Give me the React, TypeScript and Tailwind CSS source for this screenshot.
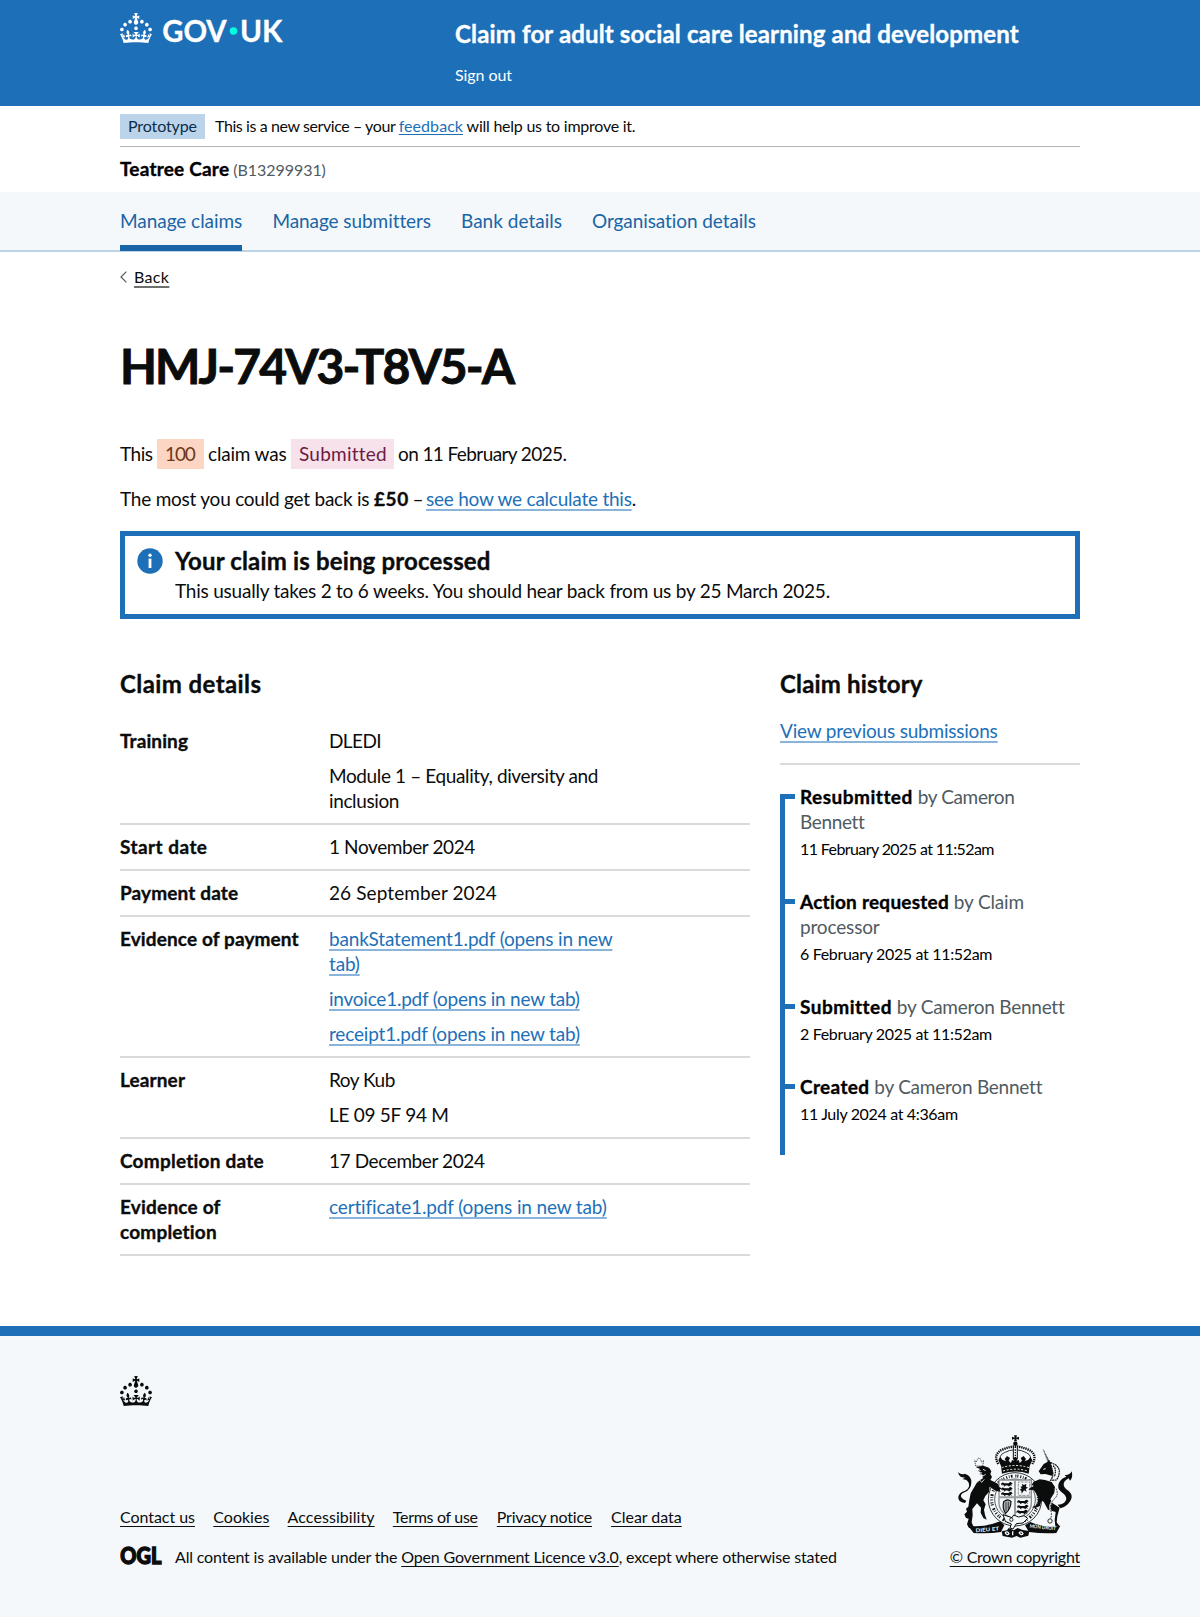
import React from 'react';

const LINK =
  'text-[#1d70b8] underline decoration-2 decoration-[#8ab4da] underline-offset-[3px]';
const FOOT_LINK = 'underline decoration-1 underline-offset-[3px]';
const BOLD = 'font-bold [-webkit-text-stroke:0.35px_currentColor]';

function CrownIcon({ className }: { className: string }) {
  return (
    <svg viewBox="0 0 32 30" className={className} fill="currentColor" aria-hidden="true">
      <path
        fillRule="evenodd"
        d="M22.6 10.4c-1 .4-2-.1-2.4-1-.4-.9.1-2 1-2.4.9-.4 2 .1 2.4 1s-.1 2-1 2.4m-5.9 6.7c-.9.4-2-.1-2.4-1-.4-.9.1-2 1-2.4.9-.4 2 .1 2.4 1s-.1 2-1 2.4m10.8-3.7c-1 .4-2-.1-2.4-1-.4-.9.1-2 1-2.4.9-.4 2 .1 2.4 1s0 2-1 2.4m3.3 4.8c-1 .4-2-.1-2.4-1-.4-.9.1-2 1-2.4.9-.4 2 .1 2.4 1s-.1 2-1 2.4M17 4.7l2.3 1.2V2.5l-2.3.7-.2-.2.9-3h-3.4l.9 3-.2.2c-.1.1-2.3-.7-2.3-.7v3.4L15 4.7c.1.1.1.2.2.2l-1.3 4c-.1.2-.1.4-.1.6 0 1.1.8 2 1.9 2.2h.7c1-.2 1.9-1.1 1.9-2.1 0-.2 0-.4-.1-.6l-1.3-4c-.1-.2 0-.2.1-.3m-7.6 5.7c.9.4 2-.1 2.4-1 .4-.9-.1-2-1-2.4-.9-.4-2 .1-2.4 1s0 2 1 2.4m-5 3c.9.4 2-.1 2.4-1 .4-.9-.1-2-1-2.4-.9-.4-2 .1-2.4 1s.1 2 1 2.4m-3.2 4.8c.9.4 2-.1 2.4-1 .4-.9-.1-2-1-2.4-.9-.4-2 .1-2.4 1s0 2 1 2.4m14.8 11c4.4 0 8.6.3 12.3.8 1.1-4.5 2.4-7 3.7-8.8l-2.5-.9c.2 1.3.3 1.9 0 2.7-.4-.4-.8-1.1-1.1-2.3l-1.2 4c.7-.5 1.3-.8 2-.9-1.1 2.5-2.6 3.1-3.5 3-1.1-.2-1.7-1.2-1.5-2.1.3-1.2 1.5-1.5 2.1-.1 1.1-2.3-.8-3-2-2.3 1.9-1.9 2.1-3.5.6-5.6-2.1 1.6-2.1 3.2-1.2 5.5-1.2-1.4-3.2-.6-2.5 1.6.9-1.4 2.1-.5 1.9.8-.2 1.1-1.7 2.1-3.5 1.9-2.7-.2-2.9-2.1-2.9-3.6.7-.1 1.9.5 2.9 1.9l.4-4.3c-1.1 1.1-2.1 1.4-3.2 1.4.4-1.2 2.1-3 2.1-3h-5.4s1.7 1.9 2.1 3c-1.1 0-2.1-.2-3.2-1.4l.4 4.3c1-1.4 2.2-2 2.9-1.9-.1 1.5-.2 3.4-2.9 3.6-1.9.2-3.4-.8-3.5-1.9-.2-1.3 1-2.2 1.9-.8.7-2.3-1.2-3-2.5-1.6.9-2.2.9-3.9-1.2-5.5-1.5 2-1.3 3.7.6 5.6-1.2-.7-3.1 0-2 2.3.6-1.4 1.8-1.1 2.1.1.2.9-.3 1.9-1.5 2.1-.9.2-2.4-.5-3.5-3 .6 0 1.2.3 2 .9l-1.2-4c-.3 1.1-.7 1.9-1.1 2.3-.3-.8-.2-1.4 0-2.7l-2.9.9C1.3 23 2.6 25.5 3.7 30c3.7-.5 7.9-.8 12.3-.8"
      />
    </svg>
  );
}

function GovUkWordmark() {
  return (
    <svg
      width="128"
      height="44"
      viewBox="0 0 128 44"
      className="ml-[9px] font-['Lato',sans-serif] text-[31px] font-bold"
      fill="#fff"
    >
      <text x="1.2" y="29" textLength="64.500" lengthAdjust="spacingAndGlyphs" stroke="#fff" strokeWidth="0.3">
        GOV
      </text>
      <circle cx="72.5" cy="18" r="3.8" fill="#00ffe0" />
      <text x="79" y="29" textLength="42.500" lengthAdjust="spacingAndGlyphs" stroke="#fff" strokeWidth="0.3">
        UK
      </text>
    </svg>
  );
}

/** Walking lion used in the shield quarters. */
function Passant({ x, y }: { x: number; y: number }) {
  return (
    <path
      transform={`translate(${x} ${y})`}
      d="M0 2q5-5 9 0l13 0q5-7 9-2l3 3-5 3 3 5-5-3-4 4-2-3-7-1-5 4-1-5-4 2-1-4-4 3z"
    />
  );
}

function RoyalArms() {
  return (
    <svg width="118" height="105" viewBox="79 40 354 315" className="mr-[6px]" fill="#0b0c0c" stroke="none" aria-hidden="true">
      {/* cross and orb */}
      <path d="M253 44h9l-2 7 8-3v9l-8-3 2 8h-9l2-8-8 3v-9l8 3z" />
      <circle cx="257" cy="69" r="6.5" />
      {/* crown arches with pearls */}
      <g fill="none" stroke="#0b0c0c">
        <path d="M206 130Q188 100 220 86Q240 78 257 77Q275 78 294 86Q326 100 308 130" strokeWidth="7" strokeDasharray="4 2.5" />
        <path d="M215 128Q204 104 224 96Q240 88 250 88M299 128Q310 104 290 96Q274 88 264 88" strokeWidth="2.5" />
        <path d="M251 76v38M263 76v38" strokeWidth="3" />
        <path d="M257 78v34" strokeWidth="4" strokeDasharray="4 4" />
      </g>
      <path d="M257 108l8 6-5 6 7-2 3 9 7-7-4-8 9-6 7 9-4 7 11-5 6-8 6 9-8 18-3 23q-40-13-80 0l-3-23-8-18 6-9 6 8 11 5-4-7 7-9 9 6-4 8 7 7 3-9 7 2-5-6z" />
      <path d="M216 141q41-13 82 0M220 151q37-11 74 0" fill="none" stroke="#f4f8fb" strokeWidth="3" strokeDasharray="6 5" />
      {/* garter */}
      <circle cx="256" cy="236" r="80" fill="#f4f8fb" stroke="#0b0c0c" strokeWidth="2.5" />
      <circle cx="256" cy="236" r="70" fill="none" stroke="#0b0c0c" strokeWidth="9" strokeDasharray="3 5 2 4 5 9 3 3 3 6" />
      <circle cx="256" cy="236" r="61" fill="none" stroke="#0b0c0c" strokeWidth="2" />
      {/* shield */}
      <path d="M208 178h97v72q-2 30-48 47q-46-17-49-47z" fill="#f4f8fb" stroke="#8b8f92" strokeWidth="4" />
      <Passant x={215} y={186} />
      <Passant x={215} y={201} />
      <Passant x={215} y={215} />
      <rect x="266" y="184" width="34" height="40" fill="none" stroke="#0b0c0c" strokeWidth="2" strokeDasharray="2 2" />
      <path d="M277 189l6 4 7-4-1 9 6 3-7 4 3 8-8-4-7 10-1-9-5-2 6-5-4-5 6-1z" />
      <path d="M222 243q12-10 22-1q0 23-16 36q-11-14-6-35z" fill="#a9acaf" stroke="#0b0c0c" strokeWidth="3.5" />
      <path d="M229 245v27M236 244v22" stroke="#0b0c0c" strokeWidth="2" />
      <Passant x={263} y={239} />
      <Passant x={263} y={254} />
      <Passant x={261} y={269} />
      <path d="M256 179v117M208 230h97" stroke="#9a9da0" strokeWidth="6" />
      {/* garter buckle and strap */}
      <path d="M220 282l27 9 5-8 15 6 16-4 11 8-14 14-20 2-10 16-9-3 4-12-18-8z" fill="#f4f8fb" stroke="#0b0c0c" strokeWidth="3" />
      <circle cx="245" cy="297" r="5" fill="none" stroke="#0b0c0c" strokeWidth="2.5" />
      {/* lion supporter */}
      <path d="M135 119l5 5 4-9 4-4 4 4 4 9 6-5-3 17h-21z" fill="none" stroke="#0b0c0c" strokeWidth="2" strokeDasharray="4 2" />
      <path d="M138 139l23-4 17 6 7 11-3 8 5 9-5 9 14 7 10 6 2 8 8 4-6 4 3 6-14-2-19-13-2 16-11 12-6 13 7 12-5 16 3 16 5 14-10-5-8-16 1-15-12-13-14 17 1 19-3 21 7 17h-15l-6-11 5-17-8-2-5-11 8-8-3-9 7-6 3-20 4-20 11-19 9-16 17-10-2-9-9-3 4-6-8-5 6-5z" />
      <path d="M144 147l9 3M160 146l8 4M146 161l9-1 5 6 8-5M155 154l-2 6M141 186l9-8 6 7 8-9" fill="none" stroke="#f4f8fb" strokeWidth="2.5" />
      <path d="M106 247q-22-3-20-19q3-14 20-18q17-8 11-24q-6-11-19-10l8-5l-12-2q-7-4-9-14q11 9 20 4q21 6 20 27q-1 20-19 28q-18 8-10 17q5 6 14 9z" />
      {/* unicorn supporter */}
      <path d="M341 87l20 38-5 3z" fill="#777b7e" stroke="#0b0c0c" strokeWidth="1.5" strokeDasharray="3 2" />
      <path d="M327 152l15-22 11-6 5-7 4 8 10 10 7 16-13 14-19-5-14 1z" />
      <path d="M362 126q26 7 27 26q0 14-9 26l-17 1q9-13 6-27z" fill="#f4f8fb" stroke="#0b0c0c" strokeWidth="3.5" strokeDasharray="6 1.5" />
      <path d="M370 135q12 9 4 34" fill="none" stroke="#0b0c0c" strokeWidth="3.500" strokeDasharray="5 2" />
      <path d="M341 146l7-2" stroke="#f4f8fb" strokeWidth="3" />
      <path d="M312 183l18-7 16 2 20 6 10 15-2 17-12 20 7 12 21 13-7 26-2 18 9 12-13-1-2-18 3-24-23-7-13-24-7-3-4 16-14 6-10-2 15-8 4-17-5-14-9-13-16-1 6-6 10-4-4-8z" />
      <path d="M377 202q10 19-5 33t-9 40" fill="none" stroke="#f4f8fb" strokeWidth="5" />
      <path d="M379 204q10 18-6 32t-8 39q1 14-3 20" fill="none" stroke="#0b0c0c" strokeWidth="2.5" strokeDasharray="5 3" />
      <circle cx="361" cy="301" r="6.5" fill="none" stroke="#0b0c0c" strokeWidth="2.5" />
      <path d="M384 252q24-1 26-18q-1-10-14-19q-16-12-8-29q7-13 22-18l-5-5q14 2 21-11q5 18-5 28l-4-7q-16 8-15 20q2 10 16 19q14 14 4 29q-11 17-30 22z" />
      {/* compartment and motto ribbon */}
      <path d="M114 314l20 3q39 1 78-15l12 12-10 20q-34 5-82 3z" />
      <path d="M392 315l-19 3q-39 1-71-14l-16 10 12 20q40 5 82 3z" />
      <path d="M216 332l16-3 5-7 15 7 12-7 15 6 20 3-3 14-24 6-11-5-14 5-28-5z" />
      <path d="M226 336q8-6 12 3-5 7-12-3M268 336q8-6 12 3-5 7-12-3M249 332v12" fill="none" stroke="#f4f8fb" strokeWidth="4" />
      <g fill="#f4f8fb" className="font-['Lato',sans-serif] text-[15px] font-bold">
        <text x="138" y="332" textLength="70" lengthAdjust="spacingAndGlyphs" transform="rotate(-5 173 327)">
          DIEU ET
        </text>
        <text x="299" y="325" textLength="79" lengthAdjust="spacingAndGlyphs" transform="rotate(6 338 325)">
          MON DROIT
        </text>
      </g>
    </svg>
  );
}

function Header() {
  return (
    <header className="h-[106px] bg-[#1d70b8] text-white">
      <div className="mx-auto flex w-[960px]">
        <div className="flex w-[335px] pt-[13px]">
          <CrownIcon className="h-[30px] w-8" />
          <GovUkWordmark />
        </div>
        <div className="pt-[19px]">
          <div className={`text-2xl leading-[30px] tracking-[0.15px] ${BOLD}`}>
            Claim for adult social care learning and development
          </div>
          <div className="mt-[16px] text-base leading-5 tracking-[-0.07px]">Sign out</div>
        </div>
      </div>
    </header>
  );
}

function PhaseBanner() {
  return (
    <div className="mx-auto w-[960px]">
      <div className="flex h-[41px] items-start border-b border-[#b1b4b6] pt-2 text-base leading-5">
        <span className="mr-2.5 h-[25px] w-[85px] bg-[#bbd4ea] px-2 pt-0.5 tracking-[-0.11px] text-[#0c2d4a]">
          Prototype
        </span>
        <span className="pt-0.5 tracking-[-0.41px]">
          This is a new service – your{' '}
          <a className="text-[#1d70b8] underline decoration-1 underline-offset-2 tracking-[0.06px]">feedback</a>
          <span className="tracking-[-0.24px]"> will help us to improve it.</span>
        </span>
      </div>
      <div className="flex h-[45px] items-baseline gap-1 pt-[9px] text-black">
        <span className={`tracking-[0.21px] ${BOLD}`}>Teatree Care</span>
        <span className="text-base leading-5 tracking-[-0.05px] text-[#505a5f]">(B13299931)</span>
      </div>
    </div>
  );
}

function ServiceNav() {
  return (
    <nav className="h-[60px] border-b-2 border-[#bbd4ea] bg-[#f4f8fb] text-[#1a65a6]">
      <div className="mx-auto flex h-[59px] w-[960px] gap-[30px] pt-[16px]">
        <a className="w-[122.4px] border-b-[6px] border-[#1a65a6] whitespace-nowrap tracking-[-0.05px]">Manage claims</a>
        <a className="w-[158.6px] whitespace-nowrap tracking-[-0.07px]">Manage submitters</a>
        <a className="w-[101px] whitespace-nowrap tracking-[0.02px]">Bank details</a>
        <a className="tracking-[-0.08px]">Organisation details</a>
      </div>
    </nav>
  );
}

function InfoBanner() {
  return (
    <section className="mt-[20px] flex h-[88px] border-[5px] border-[#1d70b8] pt-[10px] pl-[12px]">
      <svg width="26" height="26" viewBox="0 0 26 26" className="mt-[2px] mr-[12px]" aria-hidden="true">
        <circle cx="13" cy="13" r="12.7" fill="#1d70b8" />
        <circle cx="13" cy="7.3" r="1.7" fill="#fff" />
        <rect x="11.6" y="10.6" width="2.8" height="9.4" fill="#fff" />
      </svg>
      <div>
        <h2 className={`text-2xl leading-[30px] tracking-[0.16px] ${BOLD}`}>Your claim is being processed</h2>
        <p className="mt-[2px] leading-[25px] tracking-[-0.22px]">
          This usually takes 2 to 6 weeks. You should hear back from us by 25 March 2025.
        </p>
      </div>
    </section>
  );
}

function Row({ label, labelClass, children }: { label: string; labelClass: string; children: React.ReactNode }) {
  return (
    <div className="flex border-b-2 border-[#d9dadb] pt-[9px] pb-[10px]">
      <dt className={`mr-5 w-[189px] shrink-0 ${BOLD} ${labelClass}`}>{label}</dt>
      <dd className="flex w-[300px] flex-col gap-[10px]">{children}</dd>
    </div>
  );
}

function ClaimDetails() {
  return (
    <section className="w-[630px]">
      <h2 className={`text-2xl leading-[30px] tracking-[0.41px] ${BOLD}`}>Claim details</h2>
      <dl className="mt-[20px]">
        <Row label="Training" labelClass="tracking-[0.11px]">
          <p className="tracking-[-0.6px]">DLEDI</p>
          <p className="tracking-[-0.38px]">Module 1 – Equality, diversity and inclusion</p>
        </Row>
        <Row label="Start date" labelClass="tracking-[0.45px]">
          <p className="tracking-[-0.4px]">1 November 2024</p>
        </Row>
        <Row label="Payment date" labelClass="tracking-[0.13px]">
          <p className="tracking-[0.1px]">26 September 2024</p>
        </Row>
        <Row label="Evidence of payment" labelClass="tracking-[0.12px]">
          <p className="tracking-[-0.18px]"><a className={LINK}>bankStatement1.pdf (opens in new tab)</a></p>
          <p className="tracking-[-0.23px]"><a className={LINK}>invoice1.pdf (opens in new tab)</a></p>
          <p className="tracking-[-0.18px]"><a className={LINK}>receipt1.pdf (opens in new tab)</a></p>
        </Row>
        <Row label="Learner" labelClass="tracking-[0.13px]">
          <p className="tracking-[-0.5px]">Roy Kub</p>
          <p className="tracking-[-0.28px]">LE 09 5F 94 M</p>
        </Row>
        <Row label="Completion date" labelClass="tracking-[0.24px]">
          <p className="tracking-[-0.4px]">17 December 2024</p>
        </Row>
        <Row label="Evidence of completion" labelClass="tracking-[0.2px] pr-5">
          <p className="tracking-[-0.14px]"><a className={LINK}>certificate1.pdf (opens in new tab)</a></p>
        </Row>
      </dl>
    </section>
  );
}

type Event = { status: string; statusClass: string; by: string; byClass: string; when: string; whenClass: string };

const EVENTS: Event[] = [
  { status: 'Resubmitted', statusClass: 'tracking-[0.5px]', by: 'by Cameron Bennett', byClass: 'tracking-[-0.36px]', when: '11 February 2025 at 11:52am', whenClass: 'tracking-[-0.6px]' },
  { status: 'Action requested', statusClass: 'tracking-[0.24px]', by: 'by Claim processor', byClass: 'tracking-[-0.16px]', when: '6 February 2025 at 11:52am', whenClass: 'tracking-[-0.33px]' },
  { status: 'Submitted', statusClass: 'tracking-[0.5px]', by: 'by Cameron Bennett', byClass: 'tracking-[-0.25px]', when: '2 February 2025 at 11:52am', whenClass: 'tracking-[-0.34px]' },
  { status: 'Created', statusClass: 'tracking-[0.35px]', by: 'by Cameron Bennett', byClass: 'tracking-[-0.23px]', when: '11 July 2024 at 4:36am', whenClass: 'tracking-[-0.34px]' },
];

function ClaimHistory() {
  return (
    <section className="w-[300px]">
      <h2 className={`text-2xl leading-[30px] tracking-[0.17px] ${BOLD}`}>Claim history</h2>
      <p className="mt-[19px] tracking-[-0.21px]">
        <a className={LINK}>View previous submissions</a>
      </p>
      <hr className="mt-[20px] border-t-2 border-[#d9dadb]" />
      <ol className="mt-[29px] flex h-[361px] flex-col border-l-[5px] border-[#1d70b8] text-black">
        {EVENTS.map((e) => (
          <li key={e.status} className="-mt-[10px] flex pb-[40px]">
            <span className="mt-[10px] mr-[5px] h-[5px] w-[10px] shrink-0 bg-[#1d70b8]" />
            <div>
              <p>
                <span className={`${BOLD} ${e.statusClass}`}>{e.status}</span>{' '}
                <span className={`text-[#505a5f] ${e.byClass}`}>{e.by}</span>
              </p>
              <p className={`mt-[5px] text-base leading-5 ${e.whenClass}`}>{e.when}</p>
            </div>
          </li>
        ))}
      </ol>
    </section>
  );
}

function Footer() {
  return (
    <footer className="h-[292px] border-t-[10px] border-[#1d70b8] bg-[#f4f8fb]">
      <div className="mx-auto flex w-[960px] flex-col pt-[40px]">
        <CrownIcon className="h-[30px] w-8" />
        <div className="mt-[28px] flex items-end justify-between text-base leading-5">
          <div>
            <ul className="flex">
              <li className="w-[93.3px] tracking-[-0.05px]"><a className={FOOT_LINK}>Contact us</a></li>
              <li className="w-[74.3px]"><a className={FOOT_LINK}>Cookies</a></li>
              <li className="w-[105.2px] tracking-[0.07px]"><a className={FOOT_LINK}>Accessibility</a></li>
              <li className="w-[104px] tracking-[-0.3px]"><a className={FOOT_LINK}>Terms of use</a></li>
              <li className="w-[114.3px] tracking-[-0.21px]"><a className={FOOT_LINK}>Privacy notice</a></li>
              <li className="tracking-[-0.03px]"><a className={FOOT_LINK}>Clear data</a></li>
            </ul>
            <div className="mt-[20px] flex h-5">
              <svg width="46" height="28" viewBox="0 -5 46 28" className="-mt-[5px] mr-[9px] font-['Lato',sans-serif] text-[22.5px] font-black" fill="#0b0c0c" stroke="#0b0c0c" strokeWidth="1.4">
                <text x="0.3" y="17" textLength="41" lengthAdjust="spacingAndGlyphs">OGL</text>
              </svg>
              <p className="tracking-[-0.17px]">
                All content is available under the{' '}
                <a className={FOOT_LINK}>Open Government Licence v3.0</a>, except where otherwise stated
              </p>
            </div>
          </div>
          <div className="flex flex-col items-end">
            <RoyalArms />
            <a className={`mt-[8px] tracking-[-0.23px] ${FOOT_LINK}`}>© Crown copyright</a>
          </div>
        </div>
      </div>
    </footer>
  );
}

export default function App() {
  return (
    <div className="min-h-[1617px] bg-white font-['Lato','Open_Sans',sans-serif] text-[19px] leading-[25px] text-[#0b0c0c]">
      <Header />
      <PhaseBanner />
      <ServiceNav />
      <main className="mx-auto w-[960px]">
        <div className="flex h-[50px] items-center text-base leading-5">
          <svg width="7" height="12" viewBox="0 0 7 12" className="mr-[7px]" fill="none" stroke="#505a5f" strokeWidth="1.2" aria-hidden="true">
            <path d="M6.4 0.6L1 6l5.4 5.4" />
          </svg>
          <a className="-mt-px underline decoration-[#6d6e6e] decoration-2 underline-offset-[3px] tracking-[0.35px]">Back</a>
        </div>
        <h1 className="mt-[39px] text-5xl leading-[50px] font-bold tracking-[-1.9px] [-webkit-text-stroke:0.9px_currentColor]">HMJ-74V3-T8V5-A</h1>
        <div className="mt-[48px] flex h-[30px] items-center whitespace-nowrap">
          <span className="-mt-px w-[37px] tracking-[-0.48px]">This</span>
          <span className="flex h-[30px] w-[47px] items-center bg-[#fcd6c3] px-2 pb-px tracking-[-1.1px] text-[#6e3619]">100</span>
          <span className="-mt-px ml-1 w-[83px] tracking-[-0.19px]">claim was</span>
          <span className="flex h-[30px] w-[103px] items-center bg-[#f7e1eb] px-2 pb-px tracking-[0.23px] text-[#6b1c40]">Submitted</span>
          <span className="-mt-px ml-1 tracking-[-0.6px]">on 11 February 2025.</span>
        </div>
        <p className="mt-[17px] tracking-[-0.23px]">
          The most you could get back is <strong className={`tracking-[0.6px] ${BOLD}`}>£50</strong>
          <span className="tracking-[-1.2px]"> – </span>
          <a className={LINK}>see how we calculate this</a>.
        </p>
        <InfoBanner />
        <div className="mt-[50px] flex gap-[30px]">
          <ClaimDetails />
          <ClaimHistory />
        </div>
      </main>
      <div className="h-[70px]" />
      <Footer />
    </div>
  );
}
